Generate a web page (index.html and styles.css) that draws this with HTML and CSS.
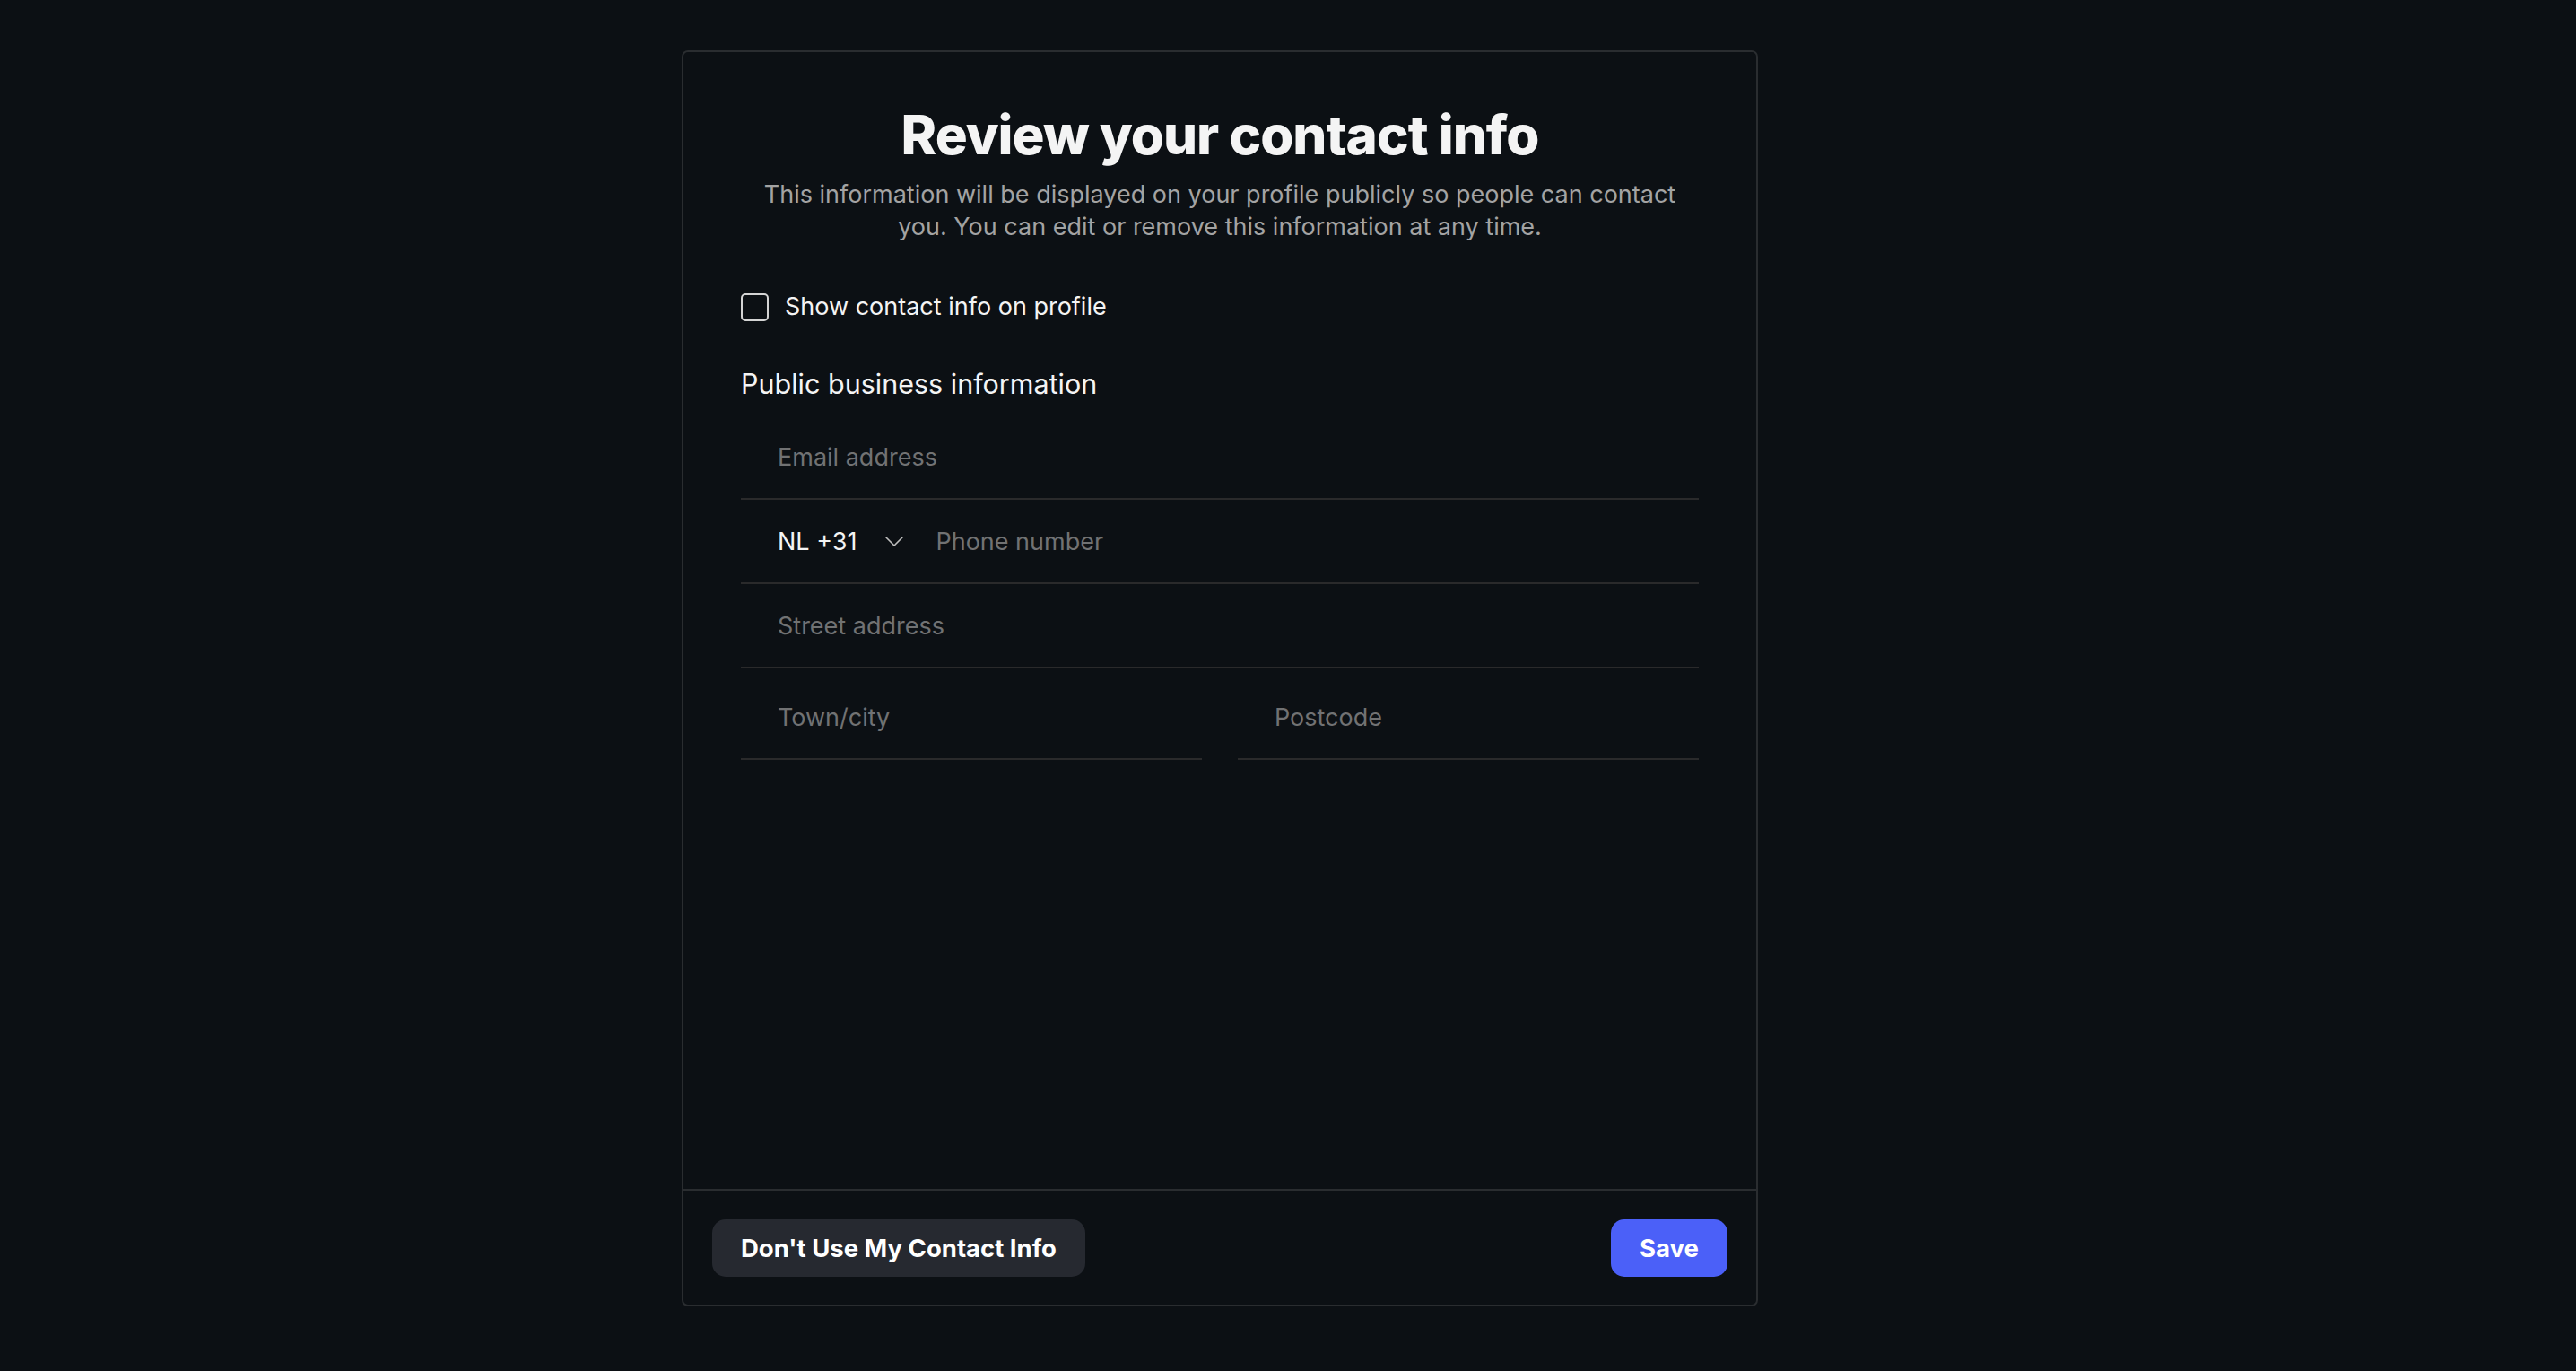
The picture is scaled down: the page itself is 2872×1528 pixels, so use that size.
FILE: index.html
```html
<!DOCTYPE html>
<html lang="en">
<head>
<meta charset="utf-8">
<title>Review your contact info</title>
<link rel="stylesheet" href="styles.css">
</head>
<body>
<div class="page">
  <div class="card">
    <div class="card-body">
      <h1 class="title">Review your contact info</h1>
      <p class="subtitle">This information will be displayed on your profile publicly so people can contact you. You can edit or remove this information at any time.</p>
      <label class="check-row">
        <span class="checkbox"></span>
        <span class="check-label">Show contact info on profile</span>
      </label>
      <h2 class="section-title">Public business information</h2>
      <div class="fields">
        <div class="field"><span class="placeholder">Email address</span></div>
        <div class="field phone">
          <span class="country">NL +31</span>
          <svg class="chevron" width="20" height="11" viewBox="0 0 20 11" fill="none"><path d="M1 1l9 9 9-9" stroke="#bfbfbf" stroke-width="1.6" stroke-linecap="round" stroke-linejoin="round"/></svg>
          <span class="placeholder">Phone number</span>
        </div>
        <div class="field"><span class="placeholder">Street address</span></div>
        <div class="field-pair">
          <div class="field tall"><span class="placeholder">Town/city</span></div>
          <div class="field tall"><span class="placeholder">Postcode</span></div>
        </div>
      </div>
    </div>
    <div class="card-footer">
      <button class="btn btn-secondary">Don't Use My Contact Info</button>
      <button class="btn btn-primary">Save</button>
    </div>
  </div>
</div>
</body>
</html>
```
FILE: styles.css
```css
html, body {
  margin: 0;
  padding: 0;
  background: #0c1014;
  font-family: Inter, "Noto Sans", "Liberation Sans", sans-serif;
  color: #f2f2f2;
}

.page {
  display: flex;
  justify-content: center;
  padding: 56px 152px 0 0;
  min-height: 1528px;
  box-sizing: border-box;
}

.card {
  width: 1200px;
  height: 1400px;
  box-sizing: border-box;
  border: 2px solid #2a2d30;
  border-radius: 7px;
  background: #0c1014;
  display: flex;
  flex-direction: column;
}

.card-body {
  flex: 1;
  padding: 57px 64px 0;
}

.title {
  margin: 0;
  text-align: center;
  font-size: 60px;
  font-weight: 800;
  line-height: 70px;
  letter-spacing: -1px;
  color: #f4f4f4;
}

.subtitle {
  margin: 14px auto 0;
  max-width: 1040px;
  text-align: center;
  font-size: 27px;
  line-height: 36px;
  color: #a3a3a3;
}

.check-row {
  display: flex;
  align-items: center;
  gap: 18px;
  margin-top: 53px;
}

.checkbox {
  width: 31px;
  height: 31px;
  box-sizing: border-box;
  border: 2px solid #d4d4d4;
  border-radius: 5px;
}

.check-label {
  font-size: 27px;
  line-height: 36px;
  color: #f4f4f4;
}

.section-title {
  margin: 48px 0 0;
  font-size: 30.5px;
  font-weight: 400;
  line-height: 40px;
  color: #f4f4f4;
}

.fields {
  margin-top: 15px;
  display: flex;
  flex-direction: column;
}

.field {
  height: 94px;
  box-sizing: border-box;
  border-bottom: 2px solid #2a2a2b;
  display: flex;
  align-items: center;
  padding: 0 41px;
  font-size: 27px;
}

.field.tall {
  height: 94px;
  margin-top: 8px;
  flex: 1;
}

.field-pair {
  display: flex;
  gap: 40px;
}

.placeholder {
  color: #717273;
}

.phone .country {
  color: #f4f4f4;
}

.chevron {
  margin: 0 36px 0 32px;
}

.card-footer {
  border-top: 2px solid #2a2d30;
  padding: 32px 32px 31px;
  display: flex;
  justify-content: space-between;
  align-items: center;
}

.btn {
  height: 64px;
  border: none;
  border-radius: 15px;
  padding: 0 32px;
  font-family: Inter, "Noto Sans", "Liberation Sans", sans-serif;
  font-size: 27.5px;
  font-weight: 700;
  color: #ffffff;
  cursor: pointer;
}

.btn-secondary {
  background: #262930;
}

.btn-primary {
  background: #4b60f8;
}
```
